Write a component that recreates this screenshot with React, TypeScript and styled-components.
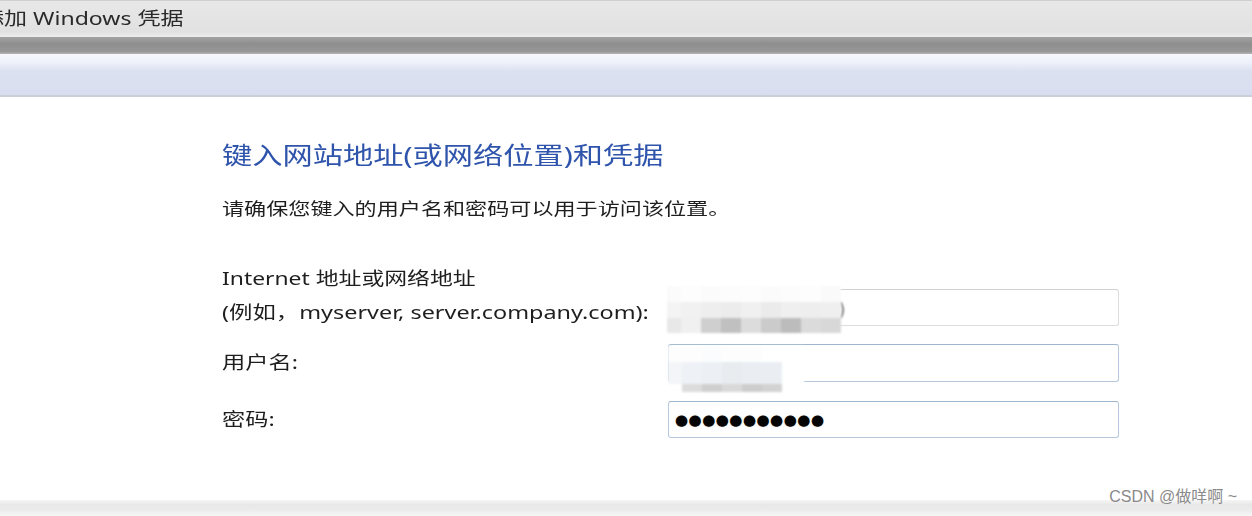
import React from "react";
import styled, { createGlobalStyle } from "styled-components";

const Global = createGlobalStyle`
  html, body { margin: 0; padding: 0; background: #ffffff; }
  body { width: 1252px; height: 516px; overflow: hidden; }
  #root { width: 1252px; height: 516px; }
`;

const FONT = `"Noto Sans", "Noto Sans CJK SC", sans-serif`;

const Page = styled.div`
  position: relative;
  width: 1252px;
  height: 516px;
  display: flex;
  flex-direction: column;
  font-family: ${FONT};
  overflow: hidden;
`;

const TitleBar = styled.div`
  height: 36px;
  border-top: 1px solid #cfcfcf;
  background: linear-gradient(#e8e8e8, #e1e1e1 85%, #ececec);
  display: flex;
  align-items: center;
  padding-left: 0;
`;

const Stretch = styled.span<{ $k?: number }>`
  display: inline-block;
  white-space: nowrap;
  transform: scaleX(${(p) => p.$k ?? 1.29});
  transform-origin: left center;
`;

const TitleText = styled(Stretch)`
  font-size: 18px;
  color: #2a2a2a;
  margin-left: -19px;
  margin-top: -4px;
`;

const DarkBand = styled.div`
  height: 17px;
  background: linear-gradient(#a3a3a3, #8e8e8e 40%, #979797 85%, #b5b5b5);
`;

const CommandBar = styled.div`
  height: 41px;
  background: linear-gradient(#f7f8fd, #eef1fa 20%, #dce1f1 42%, #d8def0 100%);
  border-bottom: 2px solid #cbcfd9;
`;

const Content = styled.div`
  flex: 1;
  background: #ffffff;
  padding: 40px 0 0 222px;
  display: flex;
  flex-direction: column;
`;

const Heading = styled.div`
  height: 36px;
  line-height: 36px;
  font-size: 24px;
  color: #2f54ab;
`;

const SubText = styled.div`
  margin-top: 22px;
  height: 28px;
  line-height: 28px;
  font-size: 17px;
  color: #1e1e1e;
`;

const Form = styled.div`
  margin-top: 38px;
  display: flex;
  flex-direction: column;
`;

const Row = styled.div<{ $gap?: number }>`
  display: flex;
  align-items: flex-start;
  margin-top: ${(p) => p.$gap ?? 0}px;
`;

const Label = styled.div<{ $pad?: number }>`
  width: 446px;
  flex: none;
  font-size: 18px;
  line-height: 34px;
  color: #1e1e1e;
  padding-top: ${(p) => p.$pad ?? 0}px;
`;

const Field = styled.div<{ $blue?: boolean; $offset?: number; $h?: number }>`
  position: relative;
  width: 451px;
  height: ${(p) => p.$h ?? 38}px;
  box-sizing: border-box;
  margin-top: ${(p) => p.$offset ?? 0}px;
  border-radius: 3px;
  border: 1px solid ${(p) => (p.$blue ? "#b7cadd" : "#dedede")};
  border-top-color: ${(p) => (p.$blue ? "#9fb6cf" : "#d2d2d2")};
  background: #ffffff;
  display: flex;
  align-items: center;
  padding-left: 6px;
`;

const Dots = styled.span`
  font-family: "DejaVu Sans", sans-serif;
  font-size: 15px;
  letter-spacing: 0.5px;
  color: #050505;
  text-shadow: 0 0 1px rgba(60, 40, 0, 0.5);
`;

const Mosaic = styled.div<{ $left: number; $top: number }>`
  position: absolute;
  left: ${(p) => p.$left}px;
  top: ${(p) => p.$top}px;
  display: grid;
  filter: blur(1.2px);
`;

const Cell = styled.div<{ $c: string }>`
  background: ${(p) => p.$c};
`;

const Tail = styled.span`
  position: absolute;
  left: 170px;
  top: 6px;
  font-size: 18px;
  color: #555;
  filter: blur(1px);
`;

const Footer = styled.div`
  height: 16px;
  background: linear-gradient(#f5f5f5, #e8e8e8 30%, #ebebeb 60%, #f6f6f6);
`;

const Watermark = styled.div`
  position: absolute;
  right: 15px;
  bottom: 9px;
  font-family: "Liberation Sans", "Noto Sans CJK SC", sans-serif;
  font-size: 16px;
  color: #8a8a8a;
`;

type MosaicProps = { left: number; top: number; cols: number[]; rows: number[]; colors: string[][] };

function MosaicBlock({ left, top, cols, rows, colors }: MosaicProps) {
  return (
    <Mosaic
      $left={left}
      $top={top}
      style={{
        gridTemplateColumns: cols.map((c) => `${c}px`).join(" "),
        gridTemplateRows: rows.map((r) => `${r}px`).join(" "),
      }}
    >
      {colors.flatMap((row, r) => row.map((c, i) => <Cell key={`${r}-${i}`} $c={c} />))}
    </Mosaic>
  );
}

const mask1 = [
  ["#fbfbfb", "#fdfdfd", "#fbfbfb", "#fcfcfc", "#fdfdfd", "#fbfbfb", "#fcfcfc", "#fdfdfd", "#fafafa"],
  ["#f4f4f4", "#f1f1f1", "#eeeeee", "#ececec", "#f0f0f0", "#ebebeb", "#efefef", "#eeeeee", "#efefef"],
  ["#e8e8e8", "#f0f0f0", "#cfcfcf", "#c0c0c0", "#dcdcdc", "#cbcbcb", "#bcbcbc", "#dbdbdb", "#d8d8d8"],
];

const mask2 = [
  ["#fdfdfd", "#fdfdfd", "#fbfcfd", "#fdfdfd", "#fdfdfd", "#ffffff", "#ffffff"],
  ["#f3f5f8", "#eef1f5", "#ecf0f4", "#e8ecef", "#eaeef2", "#eaeef2", "#ffffff"],
  ["#ffffff", "#dcdcdc", "#cfcfcf", "#d9d9d9", "#cdcdcd", "#d2d2d2", "#ffffff"],
];

export default function App() {
  return (
    <>
      <Global />
      <Page>
        <TitleBar>
          <TitleText $k={1.28}>添加 Windows 凭据</TitleText>
        </TitleBar>
        <DarkBand />
        <CommandBar />
        <Content>
          <Heading>
            <Stretch $k={1.26}>键入网站地址(或网络位置)和凭据</Stretch>
          </Heading>
          <SubText>
            <Stretch $k={1.3}>请确保您键入的用户名和密码可以用于访问该位置。</Stretch>
          </SubText>
          <Form>
            <Row>
              <Label>
                <Stretch $k={1.27}>Internet 地址或网络地址</Stretch>
                <br />
                <Stretch $k={1.3}>(例如，myserver, server.company.com):</Stretch>
              </Label>
              <Field $offset={28} $h={37}>
                <Tail>)</Tail>
                <MosaicBlock
                  left={-2}
                  top={-4}
                  cols={[14, 20, 20, 20, 20, 20, 20, 20, 20]}
                  rows={[16, 16, 15]}
                  colors={mask1}
                />
              </Field>
            </Row>
            <Row $gap={15}>
              <Label $pad={1}>
                <Stretch>用户名:</Stretch>
              </Label>
              <Field $blue>
                <MosaicBlock
                  left={-1}
                  top={1}
                  cols={[14, 20, 20, 20, 20, 20, 22]}
                  rows={[16, 22, 8]}
                  colors={mask2}
                />
              </Field>
            </Row>
            <Row $gap={19}>
              <Label $pad={1}>
                <Stretch>密码:</Stretch>
              </Label>
              <Field $blue $h={37}>
                <Dots>●●●●●●●●●●●</Dots>
              </Field>
            </Row>
          </Form>
        </Content>
        <Footer />
        <Watermark>CSDN @做咩啊 ~</Watermark>
      </Page>
    </>
  );
}
